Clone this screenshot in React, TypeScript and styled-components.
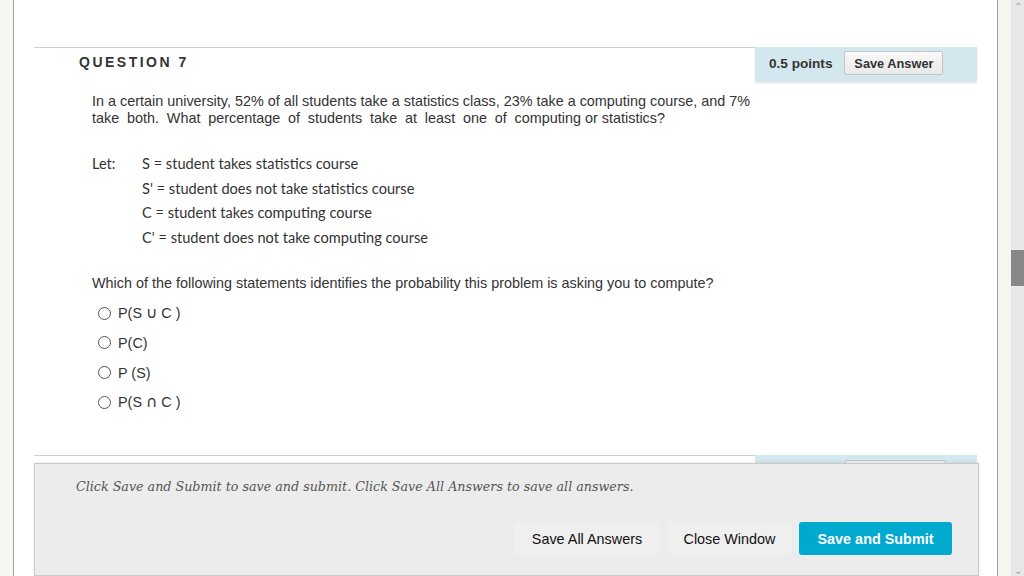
import React from 'react';
import styled, {createGlobalStyle} from 'styled-components';

const GlobalStyle = createGlobalStyle`
  html, body {
    margin: 0;
    padding: 0;
    overflow: hidden;
    background: #fff;
  }
  body {
    font-family: "Liberation Sans", Arial, sans-serif;
    color: #333;
  }
`

type AnswerType = {
    before: string
    symbol?: string
    after?: string
}

const answers: AnswerType[] = [
    {before: 'P(S ', symbol: '\u222A', after: ' C )'},
    {before: 'P(C)'},
    {before: 'P (S)'},
    {before: 'P(S ', symbol: '\u2229', after: ' C )'},
]

const definitions = [
    "S = student takes statistics course",
    "S' = student does not take statistics course",
    "C = student takes computing course",
    "C' = student does not take computing course",
]

const App: React.FC = () => {
    return (
        <>
            <GlobalStyle/>
            <Page>
                <Wallpaper/>
                <Content>
                    <QuestionHeader>
                        <TitleCell>QUESTION 7</TitleCell>
                        <PointsBox>
                            <Points>0.5 points</Points>
                            <SmallButton>Save Answer</SmallButton>
                        </PointsBox>
                    </QuestionHeader>

                    <Body>
                        <Paragraph>
                            In a certain university, 52% of all students take a statistics class, 23% take a computing course, and 7%
                            <br/>
                            <Spaced>take both. What percentage of students take at least one of computing</Spaced> or statistics?
                        </Paragraph>

                        <LetBlock>
                            <LetLabel>Let:</LetLabel>
                            <LetList>
                                {definitions.map(d => <LetLine key={d}>{d}</LetLine>)}
                            </LetList>
                        </LetBlock>

                        <Paragraph>Which of the following statements identifies the probability this problem is asking you to compute?</Paragraph>

                        <Options>
                            {answers.map((a, i) => (
                                <Option key={i}>
                                    <Radio/>
                                    <span>
                                        {a.before}
                                        {a.symbol && <SetSymbol>{a.symbol}</SetSymbol>}
                                        {a.after}
                                    </span>
                                </Option>
                            ))}
                        </Options>
                    </Body>

                    <NextHeader>
                        <NextLine/>
                        <NextBox>
                            <NextButton/>
                        </NextBox>
                    </NextHeader>

                    <Footer>
                        <FooterNote>Click Save and Submit to save and submit. Click Save All Answers to save all answers.</FooterNote>
                        <FooterButtons>
                            <PlainButton $width={146}>Save All Answers</PlainButton>
                            <PlainButton $width={125}>Close Window</PlainButton>
                            <PrimaryButton $width={153}>Save and Submit</PrimaryButton>
                        </FooterButtons>
                    </Footer>
                </Content>
                <Wallpaper/>
                <Scrollbar>
                    <ScrollArrow>&#8963;</ScrollArrow>
                    <ScrollThumb/>
                    <ScrollArrow $down>&#8964;</ScrollArrow>
                </Scrollbar>
            </Page>
        </>
    );
};

export default App;


const Page = styled.div`
  display: flex;
  width: 1024px;
  height: 576px;
  overflow: hidden;
`

const Wallpaper = styled.div`
  width: 13px;
  flex-shrink: 0;
  background-color: #eeebe3;
  background-image: linear-gradient(#f7f5f0, #f7f5f0), linear-gradient(#f7f5f0, #f7f5f0);
  background-size: 7px 2px, 2px 7px;
  background-position: 3px 8px, 5px 6px;
  background-repeat: repeat;
  border-right: 1px solid #a3a3a3;

  & + div + & {
    border-right: none;
    border-left: 1px solid #a3a3a3;
  }
`

const Content = styled.div`
  flex: 1;
  background: #fff;
  padding: 47px 20px 0 20px;
  display: flex;
  flex-direction: column;
`

const QuestionHeader = styled.div`
  display: flex;
  height: 34px;
  flex-shrink: 0;
`

const TitleCell = styled.div`
  flex: 1;
  border-top: 1px solid #cfcfcf;
  padding: 6px 0 0 45px;
  font-size: 14px;
  font-weight: bold;
  letter-spacing: 2.5px;
  color: #333;
`

const PointsBox = styled.div`
  width: 222px;
  box-sizing: border-box;
  background: #d3e8ee;
  box-shadow: 0 2px 2px rgba(0, 0, 0, 0.12);
  display: flex;
  align-items: center;
  padding: 0 0 2px 14px;
  gap: 12px;
`

const Points = styled.span`
  font-size: 13.6px;
  font-weight: bold;
  color: #333;
`

const SmallButton = styled.button`
  width: 99px;
  height: 24px;
  font-family: "Liberation Sans", Arial, sans-serif;
  font-size: 12.8px;
  font-weight: bold;
  color: #333;
  background: linear-gradient(#f9f9f9, #e9e9e9);
  border: 1px solid #c4c4c4;
  border-radius: 2px;
  padding: 0;
`

const Body = styled.div`
  padding: 12px 0 38px 58px;
  flex-shrink: 0;
`

const Paragraph = styled.div`
  font-size: 14.4px;
  line-height: 17px;
  color: #333;
`

const Spaced = styled.span`
  word-spacing: 3.8px;
`

const LetBlock = styled.div`
  display: flex;
  margin: 25px 0 25px 0;
  font-family: Lato, "Open Sans", sans-serif;
  font-size: 14.6px;
  color: #333;
`

const LetLabel = styled.div`
  width: 50px;
  line-height: 24.6px;
`

const LetList = styled.div`
  display: flex;
  flex-direction: column;
`

const LetLine = styled.div`
  line-height: 24.6px;
`

const Options = styled.div`
  margin-top: 6px;
  display: flex;
  flex-direction: column;
`

const Option = styled.label`
  display: flex;
  align-items: center;
  height: 29.7px;
  gap: 7px;
  padding-left: 6px;
  font-size: 14.4px;
  color: #333;
`

const SetSymbol = styled.span`
  font-family: "DejaVu Sans", sans-serif;
  font-size: 15.5px;
  line-height: 14px;
`

const Radio = styled.span`
  width: 11px;
  height: 11px;
  border: 1px solid #555;
  border-radius: 50%;
  background: #fff;
`

const NextHeader = styled.div`
  display: flex;
  height: 8px;
  flex-shrink: 0;
  overflow: hidden;
`

const NextLine = styled.div`
  flex: 1;
  border-top: 1px solid #cfcfcf;
`

const NextBox = styled.div`
  width: 222px;
  background: #d3e8ee;
  padding: 5px 0 0 90px;
  box-sizing: border-box;
`

const NextButton = styled.div`
  width: 99px;
  height: 10px;
  border: 1px solid #c4c4c4;
  border-radius: 2px;
  background: #f3f3f3;
`

const Footer = styled.div`
  margin-right: -2px;
  flex: 1;
  background: #ececec;
  border: 1px solid #c9c9c9;
  box-shadow: 0 -1px 3px rgba(0, 0, 0, 0.08);
  padding: 14px 26px 0 41px;
`

const FooterNote = styled.div`
  font-family: "DejaVu Serif", Georgia, serif;
  font-style: italic;
  font-size: 12.7px;
  line-height: 17px;
  color: #555;
`

const FooterButtons = styled.div`
  margin-top: 27px;
  display: flex;
  justify-content: flex-end;
  gap: 7px;
`

const PlainButton = styled.button<{ $width: number }>`
  width: ${(p) => p.$width}px;
  height: 33px;
  padding: 0;
  border: none;
  border-radius: 2px;
  background: #efefef;
  font-family: "Liberation Sans", Arial, sans-serif;
  font-size: 14.4px;
  color: #111;
`

const PrimaryButton = styled(PlainButton)`
  background: #00aacf;
  color: #fff;
  font-weight: bold;
  border-radius: 3px;
`

const Scrollbar = styled.div`
  width: 13px;
  flex-shrink: 0;
  background: #e8e8e8;
  display: flex;
  flex-direction: column;
  align-items: center;
`

const ScrollArrow = styled.div<{ $down?: boolean }>`
  font-size: 10px;
  line-height: 10px;
  color: #a0a0a0;
  height: 10px;
  margin-top: ${(p) => (p.$down ? 'auto' : '2px')};
`

const ScrollThumb = styled.div`
  width: 13px;
  height: 36px;
  margin-top: 238px;
  background: #888;
`
